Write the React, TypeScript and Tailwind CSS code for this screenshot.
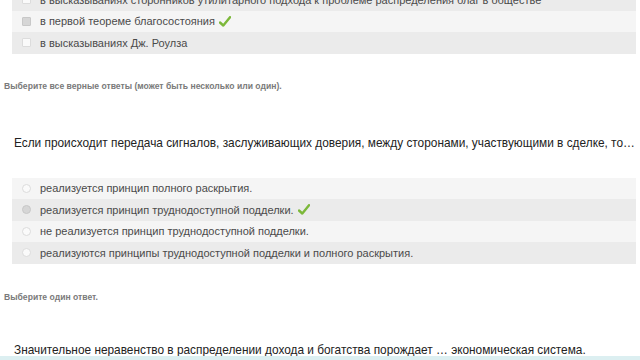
import React from 'react';

type Row = { text: string; checked?: boolean; correct?: boolean };

const font = { fontFamily: '"Liberation Sans", Arial, sans-serif' };

const Check = () => (
  <svg width="12" height="11" viewBox="0 0 12 11" className="ml-1 inline-block">
    <path d="M1 6.5 L4.3 9.5 L11 1.2" fill="none" stroke="#7cb83a" strokeWidth="2.4" strokeLinecap="round" strokeLinejoin="round" />
  </svg>
);

const Box = ({ checked, radio }: { checked?: boolean; radio?: boolean }) => (
  <span
    className={`inline-block h-[9px] w-[9px] border ${radio ? 'rounded-full' : 'rounded-[1px]'} ${
      checked ? 'border-[#c8c8c8] bg-[#d6d6d6]' : 'border-[#dcdcdc] bg-[#fafafa]'
    }`}
  />
);

const Answers = ({ rows, radio, startDark }: { rows: Row[]; radio?: boolean; startDark?: boolean }) => (
  <div className="ml-[12px] mr-[4px]">
    {rows.map((r, i) => {
      const dark = startDark ? i % 2 === 0 : i % 2 === 1;
      return (
        <div
          key={i}
          className={`flex h-[21.5px] items-center text-[11px] text-[#4a4a4a] ${dark ? 'bg-[#ebebeb]' : 'bg-[#f5f5f5]'}`}
        >
          <span className="flex w-[28px] justify-center">
            <Box checked={r.checked} radio={radio} />
          </span>
          <span className="whitespace-nowrap">{r.text}</span>
          {r.correct && <Check />}
        </div>
      );
    })}
  </div>
);

export default function App() {
  return (
    <div className="relative h-[360px] w-[640px] overflow-hidden bg-white" style={font}>
      <div className="mt-[-11px]">
        <Answers
          startDark
          rows={[
            { text: 'в высказываниях сторонников утилитарного подхода к проблеме распределения благ в обществе' },
            { text: 'в первой теореме благосостояния', checked: true, correct: true },
            { text: 'в высказываниях Дж. Роулза' },
          ]}
        />
      </div>
      <p className="mt-[26px] pl-[4px] text-[8.6px] font-bold leading-[12px] text-[#7a7a7a]">
        Выберите все верные ответы (может быть несколько или один).
      </p>
      <p className="mt-[43px] whitespace-nowrap pl-[14px] text-[11.85px] leading-[16px] text-[#222]">
        Если происходит передача сигналов, заслуживающих доверия, между сторонами, участвующими в сделке, то…
      </p>
      <div className="mt-[27px]">
        <Answers
          radio
          rows={[
            { text: 'реализуется принцип полного раскрытия.' },
            { text: 'реализуется принцип труднодоступной подделки.', checked: true, correct: true },
            { text: 'не реализуется принцип труднодоступной подделки.' },
            { text: 'реализуются принципы труднодоступной подделки и полного раскрытия.' },
          ]}
        />
      </div>
      <p className="mt-[27px] pl-[4px] text-[8.6px] font-bold leading-[12px] text-[#7a7a7a]">Выберите один ответ.</p>
      <p className="mt-[39px] whitespace-nowrap pl-[14px] text-[11.85px] leading-[16px] text-[#222]">
        Значительное неравенство в распределении дохода и богатства порождает … экономическая система.
      </p>
      <div className="absolute bottom-0 left-0 h-[4px] w-full bg-[#dceff1]" />
    </div>
  );
}
